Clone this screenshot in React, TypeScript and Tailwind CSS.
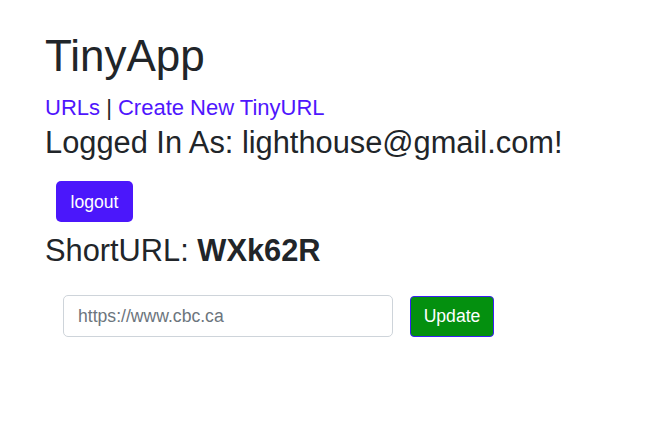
export default function App() {
  return (
    <div className="min-h-screen bg-white pl-[45px] pt-[30px] text-[#212529] font-['Liberation_Sans',Arial,sans-serif]">
      <h1 className="text-[44px] leading-[52.8px] font-normal">TinyApp</h1>
      <nav className="mt-[12px] text-[22px] leading-[26.4px]">
        <a href="#" className="text-[#4f16fd]">URLs</a>
        <span> | </span>
        <a href="#" className="text-[#4f16fd]">Create New TinyURL</a>
      </nav>
      <h3 className="mt-[3px] text-[30.8px] leading-[37px]">Logged In As: lighthouse@gmail.com!</h3>
      <div className="mt-[20px] ml-[11px]">
        <button className="h-[41px] w-[77px] rounded-[5px] bg-[#4b17fb] text-[17.6px] text-white">logout</button>
      </div>
      <h3 className="mt-[10px] text-[30.8px] leading-[37px]">
        ShortURL: <b className="font-bold">WXk62R</b>
      </h3>
      <form className="mt-[26px] ml-[18px] flex items-center gap-[17px]">
        <input
          placeholder="https://www.cbc.ca"
          className="h-[42px] w-[330px] rounded-[5px] border border-[#ced4da] px-[14px] text-[17.6px] placeholder:text-[#6c757d] outline-none"
        />
        <button type="button" className="h-[41px] w-[84px] rounded-[4px] border border-solid border-[#3a1ff5] bg-[#04900f] text-[17.6px] text-white">
          Update
        </button>
      </form>
    </div>
  );
}
